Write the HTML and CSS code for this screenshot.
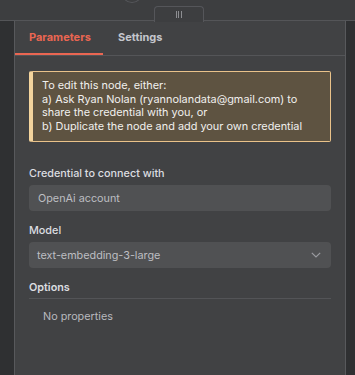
FILE: index.html
```html
<!DOCTYPE html>
<html lang="en">
<head>
  <meta charset="UTF-8" />
  <meta name="viewport" content="width=device-width, initial-scale=1" />
  <title>Node parameters</title>
  <link rel="stylesheet" href="styles.css">
</head>
<body>

<!-- Canvas strip with drag handle -->
<div class="topbar">
  <div class="node-circle"></div>
  <div class="drag-handle"><span class="grip"></span></div>
</div>

<div class="layout">
  <div class="side"></div>

  <!-- Panel -->
  <div class="panel">
    <div class="tabs">
      <div class="tab active">Parameters</div>
      <div class="tab">Settings</div>
    </div>

    <div class="content">
      <div class="callout">
        To edit this node, either:<br>
        a) Ask Ryan Nolan (ryannolandata@gmail.com) to share the credential with you, or<br>
        b) Duplicate the node and add your own credential
      </div>

      <div class="field">
        <label class="field-label">Credential to connect with</label>
        <div class="input">OpenAi account</div>
      </div>

      <div class="field">
        <label class="field-label">Model</label>
        <div class="input select">
          <span>text-embedding-3-large</span>
          <svg class="chevron" width="10" height="6" viewBox="0 0 10 6">
            <path d="M0.8 0.8 L5 5 L9.2 0.8" fill="none" stroke="#9a9ba0" stroke-width="1.2"/>
          </svg>
        </div>
      </div>

      <div class="options">
        <div class="options-title">Options</div>
        <div class="no-props">No properties</div>
      </div>
    </div>
  </div>

  <div class="side"></div>
</div>

</body>
</html>
```

FILE: styles.css
```css
* {
  margin: 0; padding: 0; box-sizing: border-box;
}
body {
  font-family: 'Inter', 'Open Sans', sans-serif;
  background: #3d3e40;
  height: 100vh;
  overflow: hidden;
  display: flex;
  flex-direction: column;
}
.topbar {
  height: 21px;
  position: relative;
  border-bottom: 1px solid #545558;
  display: flex;
  justify-content: center;
}
.node-circle {
  position: absolute;
  left: 121px;
  top: -20px;
  width: 22px;
  height: 23px;
  border-radius: 50%;
  border: 1px solid #55565a;
}
.drag-handle {
  margin-top: 5px;
  margin-left: 3px;
  width: 50px;
  height: 16px;
  border: 1px solid #55565a;
  border-bottom: none;
  border-radius: 4px 4px 0 0;
  background: #3d3e40;
  position: relative;
  top: 1px;
  display: flex;
  justify-content: center;
  align-items: center;
}
.grip {
  width: 6px;
  height: 7px;
  border-left: 1px solid #8d8e92;
  border-right: 1px solid #8d8e92;
  position: relative;
}
.grip::after {
  content: '';
  position: absolute;
  left: 1px;
  top: 0;
  width: 1px;
  height: 7px;
  background: #8d8e92;
}
.layout {
  flex: 1;
  display: flex;
}
.side {
  width: 14px;
  background: #2f3032;
}
.side:last-child {
  width: 9px;
}
.panel {
  flex: 1;
  background: #414244;
  border-left: 1px solid #58595c;
  border-right: 1px solid #58595c;
}
.tabs {
  display: flex;
  border-bottom: 1px solid #545558;
  height: 35px;
}
.tab {
  font-size: 11px;
  font-weight: 700;
  color: #c4c6cc;
  padding: 9px 14px 0;
  height: 34px;
}
.tab.active {
  color: #ea6652;
  border-bottom: 2px solid #ea6652;
  width: 88px;
}
.tab + .tab {
  padding-left: 15px;
}
.content {
  padding: 15px 14px 0;
}
.callout {
  background: #5e5341;
  border: 1px solid #e9c28a;
  border-left: 4px solid #f4d49c;
  border-radius: 2px;
  color: #f1f0ee;
  font-size: 10.9px;
  line-height: 13.5px;
  padding: 7px 10px 8px 9px;
}
.field {
  margin-top: 25px;
}
.field + .field {
  margin-top: 13px;
}
.field-label {
  display: block;
  font-size: 10.8px;
  line-height: 13px;
  font-weight: 500;
  color: #dcdde0;
  margin-bottom: 5px;
}
.input {
  height: 26px;
  background: #505153;
  border-radius: 4px;
  color: #bdbec2;
  font-size: 10.8px;
  padding: 0 9px;
  display: flex;
  align-items: center;
}
.select {
  justify-content: space-between;
  padding-left: 8px;
  padding-right: 10px;
}
.options {
  margin-top: 13px;
}
.options-title {
  font-size: 10.8px;
  line-height: 13px;
  font-weight: 600;
  color: #dcdde0;
  padding-bottom: 4px;
  border-bottom: 1px solid #535457;
}
.no-props {
  font-size: 10.8px;
  line-height: 13px;
  color: #b8b9be;
  padding: 11px 0 0 14px;
}
```
